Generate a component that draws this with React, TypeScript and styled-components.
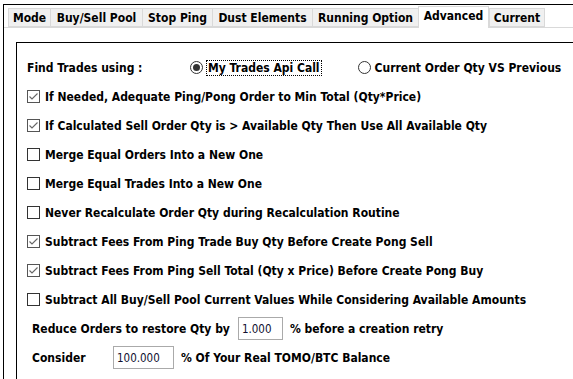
import { createGlobalStyle, styled } from "styled-components";

const GlobalStyle = createGlobalStyle`
  html, body {
    margin: 0;
    background: #fff;
  }
  body {
    font-family: "DejaVu Sans Condensed", "DejaVu Sans", sans-serif;
    font-weight: bold;
    font-size: 12px;
    color: #000;
  }
`;

const tabs = [
  { label: "Mode", width: 43 },
  { label: "Buy/Sell Pool", width: 93 },
  { label: "Stop Ping", width: 71 },
  { label: "Dust Elements", width: 101 },
  { label: "Running Option", width: 107 },
  { label: "Advanced", width: 71, active: true },
  { label: "Current", width: 56 },
];

const checks = [
  { label: "If Needed, Adequate Ping/Pong Order to Min Total (Qty*Price)", checked: true },
  { label: "If Calculated Sell Order Qty is > Available Qty Then Use All Available Qty", checked: true },
  { label: "Merge Equal Orders Into a New One", checked: false },
  { label: "Merge Equal Trades Into a New One", checked: false },
  { label: "Never Recalculate Order Qty during Recalculation Routine", checked: false },
  { label: "Subtract Fees From Ping Trade Buy Qty Before Create Pong Sell", checked: true },
  { label: "Subtract Fees From Ping Sell Total (Qty x Price) Before Create Pong Buy", checked: true },
  { label: "Subtract All Buy/Sell Pool Current Values While Considering Available Amounts", checked: false },
];

const App = () => {
  return (
    <>
      <GlobalStyle />
      <S.Window>
        <S.TabStrip>
          {tabs.map((t) => (
            <S.Tab key={t.label} $active={!!t.active} $width={t.width}>
              {t.label}
            </S.Tab>
          ))}
        </S.TabStrip>
        <S.Panel>
          <S.Frame>
            <S.Row>
              <S.FindLabel>Find Trades using :</S.FindLabel>
              <S.RadioWrap>
                <S.Radio $checked />
                <S.Focused>My Trades Api Call</S.Focused>
              </S.RadioWrap>
              <S.RadioWrap $gap={37}>
                <S.Radio />
                <span>Current Order Qty VS Previous</span>
              </S.RadioWrap>
            </S.Row>
            {checks.map((c) => (
              <S.Row key={c.label}>
                <S.CheckBox $checked={c.checked}>
                  {c.checked && (
                    <svg width="11" height="11" viewBox="0 0 11 11">
                      <path d="M1.5 5.5 L4 8 L9.5 2.5" fill="none" stroke="#666" strokeWidth="1.1" />
                    </svg>
                  )}
                </S.CheckBox>
                <span>{c.label}</span>
              </S.Row>
            ))}
            <S.Row $indent={5}>
              <span>Reduce Orders to restore Qty by</span>
              <S.Input $left={8} $width={45}>1.000</S.Input>
              <S.After>% before a creation retry</S.After>
            </S.Row>
            <S.Row $indent={5}>
              <S.ConsiderLabel>Consider</S.ConsiderLabel>
              <S.Input $left={0} $width={61}>100.000</S.Input>
              <S.After>% Of Your Real TOMO/BTC Balance</S.After>
            </S.Row>
          </S.Frame>
        </S.Panel>
      </S.Window>
    </>
  );
};

export default App;

const S = {
  Window: styled.div`
    margin: 4px 0 0 3px;
    height: 375px;
    border-top: 1px solid #000;
    border-left: 1px solid #000;
    display: flex;
    flex-direction: column;
    overflow: hidden;
  `,
  TabStrip: styled.div`
    display: flex;
    align-items: flex-end;
    padding: 1px 0 0 4px;
    height: 22px;
    box-sizing: border-box;
    position: relative;
    z-index: 1;
  `,
  Tab: styled.div<{ $active: boolean; $width: number }>`
    width: ${(p) => p.$width}px;
    height: ${(p) => (p.$active ? 22 : 19)}px;
    box-sizing: border-box;
    border: 1px solid #d9d9d9;
    border-bottom: ${(p) => (p.$active ? "none" : "1px solid #d9d9d9")};
    margin-right: ${(p) => (p.$active ? 0 : -1)}px;
    margin-bottom: ${(p) => (p.$active ? -1 : 0)}px;
    background: ${(p) => (p.$active ? "#fff" : "#f0f0f0")};
    display: flex;
    align-items: ${(p) => (p.$active ? "flex-start" : "center")};
    padding-top: ${(p) => (p.$active ? 2 : 0)}px;
    justify-content: center;
    white-space: nowrap;
    font-size: 12px;
  `,
  Panel: styled.div`
    flex: 1;
    border-top: 1px solid #d9d9d9;
    padding: 14px 0 0 12px;
    display: flex;
  `,
  Frame: styled.div`
    flex: 1;
    border-top: 1px solid #000;
    border-left: 1px solid #000;
    padding: 10px 0 0 10px;
    display: flex;
    flex-direction: column;
  `,
  Row: styled.div<{ $indent?: number }>`
    height: 29px;
    display: flex;
    align-items: center;
    white-space: nowrap;
    padding-left: ${(p) => p.$indent ?? 0}px;
  `,
  FindLabel: styled.span`
    width: 163px;
  `,
  RadioWrap: styled.div<{ $gap?: number }>`
    display: flex;
    align-items: center;
    margin-left: ${(p) => p.$gap ?? 0}px;
  `,
  Radio: styled.span<{ $checked?: boolean }>`
    width: 13px;
    height: 13px;
    box-sizing: border-box;
    border: 1px solid #333;
    border-radius: 50%;
    margin-right: 4px;
    display: flex;
    align-items: center;
    justify-content: center;
    &::after {
      content: "";
      width: 7px;
      height: 7px;
      border-radius: 50%;
      background: #333;
      display: ${(p) => (p.$checked ? "block" : "none")};
    }
  `,
  Focused: styled.span`
    outline: 1px dotted #000;
    outline-offset: 0;
    padding: 0 1px;
  `,
  CheckBox: styled.span<{ $checked: boolean }>`
    width: 13px;
    height: 13px;
    box-sizing: border-box;
    border: 1px solid ${(p) => (p.$checked ? "#555" : "#333")};
    margin-right: 5px;
    display: flex;
    align-items: center;
    justify-content: center;
  `,
  Input: styled.div<{ $left: number; $width: number }>`
    margin-left: ${(p) => p.$left}px;
    width: ${(p) => p.$width}px;
    height: 23px;
    box-sizing: border-box;
    border: 1px solid #aaa;
    padding: 0 3px;
    display: flex;
    align-items: center;
    font-family: "DejaVu Sans Condensed", "DejaVu Sans", sans-serif;
    font-weight: normal;
    font-size: 11.5px;
    color: #101030;
  `,
  After: styled.span`
    margin-left: 7px;
  `,
  ConsiderLabel: styled.span`
    width: 81px;
  `,
};
